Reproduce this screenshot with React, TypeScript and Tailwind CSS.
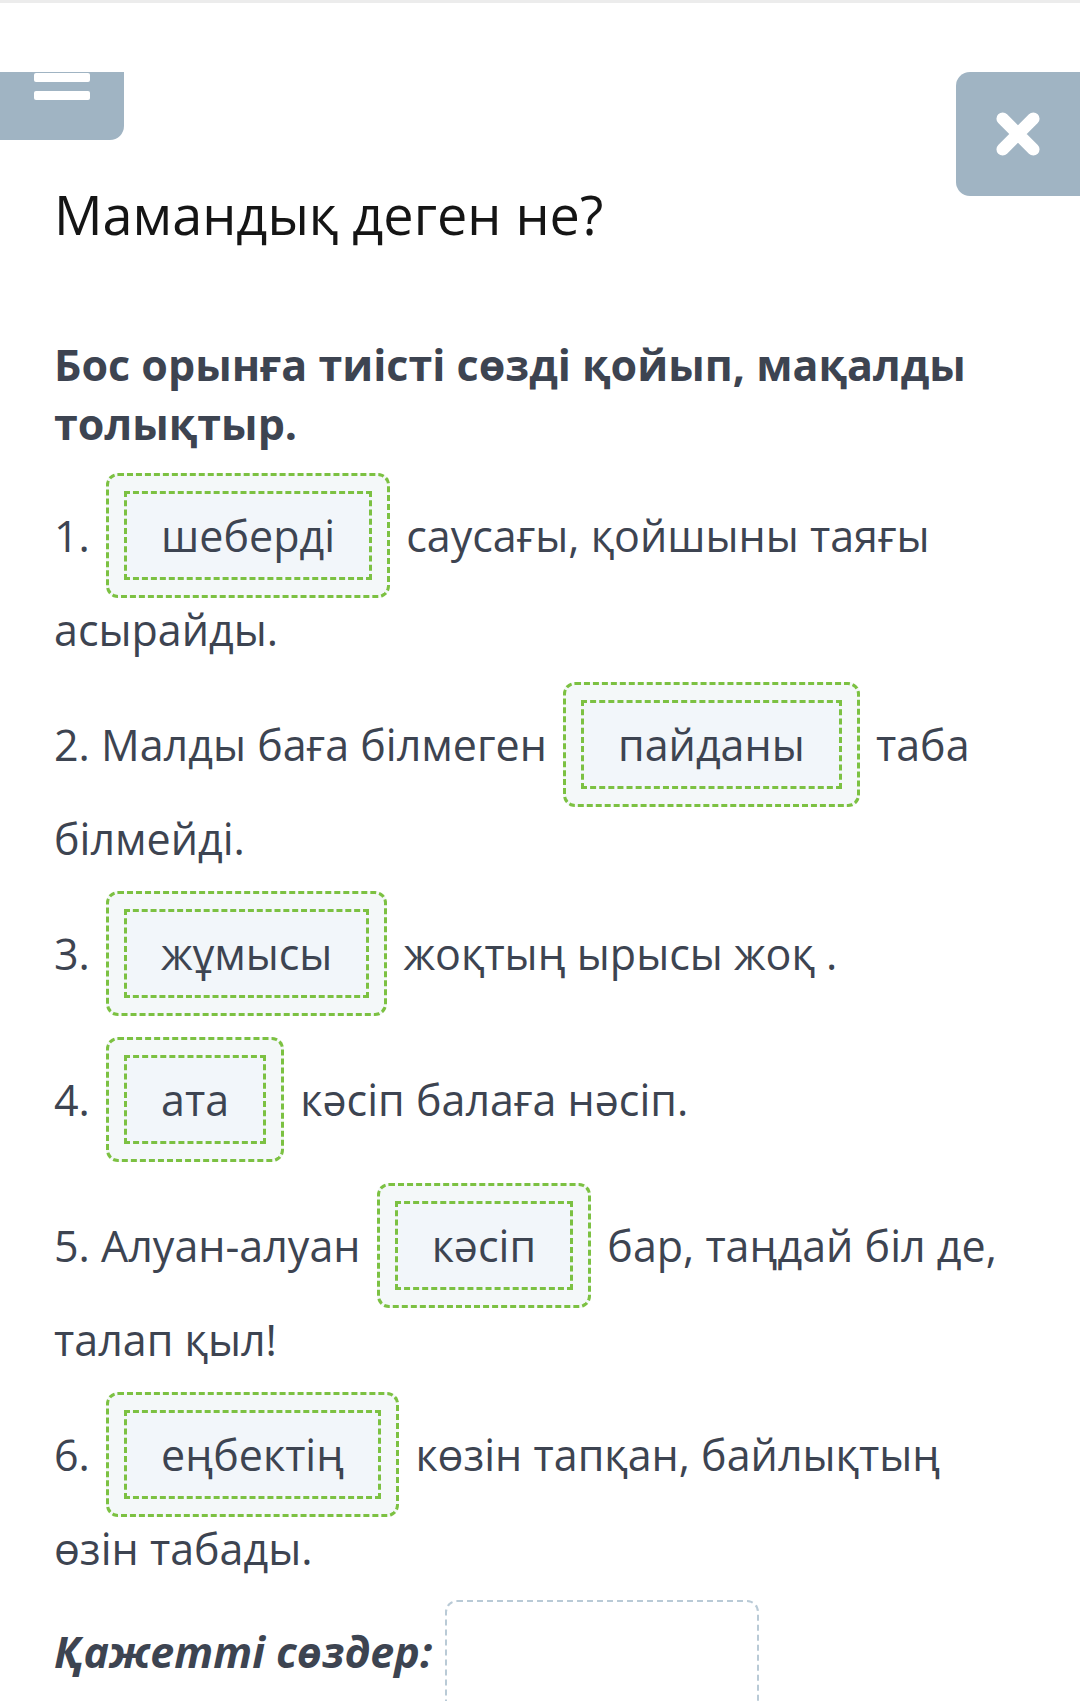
import type { ReactNode } from "react";

type Row = {
  before: string;
  word: string;
  after: string;
};

const rows: Row[] = [
  { before: "1.", word: "шеберді", after: "саусағы, қойшыны таяғы асырайды." },
  { before: "2. Малды баға білмеген", word: "пайданы", after: "таба білмейді." },
  { before: "3.", word: "жұмысы", after: "жоқтың ырысы жоқ ." },
  { before: "4.", word: "ата", after: "кәсіп балаға нәсіп." },
  { before: "5. Алуан-алуан", word: "кәсіп", after: "бар, таңдай біл де, талап қыл!" },
  { before: "6.", word: "еңбектің", after: "көзін тапқан, байлықтың өзін табады." },
];

/** Толтырылған бос орын */
function Blank({ children }: { children: ReactNode }) {
  return (
    <span className="mx-[5px] inline-block rounded-[12px] border-[3px] border-dashed border-[#7cc142] bg-[#f4f8f9] p-[15px]">
      <span className="block border-[3px] border-dashed border-[#7cc142] bg-[#f2f6fa] px-[34px] py-[10px]">
        {children}
      </span>
    </span>
  );
}

export default function App() {
  return (
    <div className="min-h-screen border-t-[3px] border-[#ececec] bg-white font-['Open_Sans',sans-serif] text-[#3d4451]">
      <div className="flex items-start justify-between pt-[69px]">
        <div>
          <button
            type="button"
            className="flex h-[68px] w-[124px] flex-col items-center gap-[9px] rounded-br-[14px] bg-[#a0b4c3] pt-[1px]"
          >
            <span className="block h-[9px] w-[56px] rounded-[2px] bg-white" />
            <span className="block h-[9px] w-[56px] rounded-[2px] bg-white" />
          </button>
          <h1 className="mt-[42px] pl-[54px] text-[54px] leading-[64px] font-normal text-[#151515]">
            Мамандық деген не?
          </h1>
        </div>
        <button
          type="button"
          className="flex h-[124px] w-[124px] items-center justify-center rounded-l-[14px] bg-[#a0b4c3]"
        >
          <svg width="46" height="46" viewBox="0 0 48 48">
            <path
              d="M8 8 L40 40 M40 8 L8 40"
              stroke="white"
              strokeWidth="13"
              strokeLinecap="round"
              fill="none"
            />
          </svg>
        </button>
      </div>

      <div className="pl-[54px] pr-[60px]">
        <p className="mt-[89px] text-[43px] leading-[59px] font-bold">
          Бос орынға тиісті сөзді қойып, мақалды толықтыр.
        </p>

        <div className="mt-[20px] flex flex-col gap-[21px]">
          {rows.map((row) => (
            <p key={row.word + row.before} className="text-[43px] leading-[63px]">
              {row.before + " "}
              <Blank>{row.word}</Blank>
              {" " + row.after}
            </p>
          ))}
        </div>

        <div className="mt-[20px] flex items-start gap-[13px]">
          <span className="mt-[20px] text-[43px] leading-[63px] font-bold italic">
            Қажетті сөздер:
          </span>
          <div className="h-[150px] w-[314px] rounded-[12px] border-2 border-dashed border-[#b9cad6]" />
        </div>
      </div>
    </div>
  );
}
